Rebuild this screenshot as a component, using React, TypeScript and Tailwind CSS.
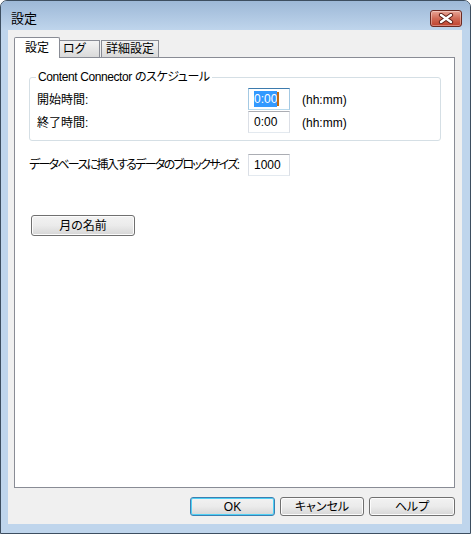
const font =
  "font-['Liberation_Sans','Noto_Sans_CJK_JP',sans-serif] [font-feature-settings:'palt']";

const CloseButton = () => (
  <div className="mt-[9px] w-[32px] h-[17px] rounded-[3px] border border-[#6b2a22] bg-gradient-to-b from-[#e8a597] via-[#cf6a56] to-[#c0402c] flex items-center justify-center shadow-[inset_0_0_0_1px_rgba(255,255,255,0.35)]">
    <svg width="16" height="11" viewBox="0 0 16 11">
      <path d="M3 2 L13 9 M13 2 L3 9" stroke="#5b1b13" strokeWidth="4.2" strokeLinecap="round" />
      <path d="M3 2 L13 9 M13 2 L3 9" stroke="#ffffff" strokeWidth="2.4" strokeLinecap="round" />
    </svg>
  </div>
);

const Button = ({ label, w, primary }: { label: string; w: string; primary?: boolean }) => (
  <div
    className={`${w} h-full rounded-[3px] border flex items-center justify-center bg-gradient-to-b from-[#f2f2f2] via-[#ebebeb] to-[#d6d6d6] ${
      primary
        ? "border-[#3c7fb1] shadow-[inset_0_0_0_1px_#4fd0f5]"
        : "border-[#707070] shadow-[inset_0_0_0_1px_#fcfcfc]"
    }`}
  >
    {label}
  </div>
);

export default function App() {
  return (
    <div className={`w-[471px] h-[534px] rounded-t-[7px] border border-[#3d4e60] bg-[#bfd5ec] flex flex-col text-[12px] leading-[16px] text-black ${font}`}>
      {/* title bar */}
      <div className="h-[29px] shrink-0 flex items-start justify-between pl-[10px] pr-[8px] rounded-t-[6px] bg-gradient-to-b from-[#9db8d7] to-[#bfd5ec]">
        <span className="mt-[10px] text-[13px]">設定</span>
        <CloseButton />
      </div>

      {/* client */}
      <div className="ml-[7px] mr-[8px] h-[494px] bg-[#f0f0f0] flex flex-col pt-[7px] pl-[6px] pr-[7px]">
        {/* tabs */}
        <div className="h-[20px] shrink-0 flex items-end relative z-10">
          <div className="w-[46px] h-[21px] -mb-px bg-white border border-b-0 border-[#898c95] rounded-t-[2px] flex items-center justify-center">
            設定
          </div>
          <div className="w-[40px] h-[17px] border border-l-0 border-b-0 border-[#898c95] bg-gradient-to-b from-[#f3f3f3] to-[#dadada] flex items-center pl-[3px]">
            ログ
          </div>
          <div className="w-[58px] h-[17px] ml-px border border-b-0 border-[#898c95] bg-gradient-to-b from-[#f3f3f3] to-[#dadada] flex items-center justify-center">
            詳細設定
          </div>
        </div>

        {/* panel */}
        <div className="h-[431px] shrink-0 bg-white border border-[#898c95] flex flex-col items-start">
          <fieldset className="mt-[12px] ml-[14px] w-[412px] border border-[#d5dfe5] rounded-[3px] pl-[7px] pb-[7px] flex flex-col gap-px">
            <legend className="-ml-[1px] px-[2px] leading-[14px] tracking-[-0.4px]">Content Connector のスケジュール</legend>
            <div className="mt-[4px] h-[22px] flex items-center">
              <span className="w-[211px] pt-[2px]">開始時間:</span>
              <div className="w-[42px] h-[22px] border border-[#3d7bad] border-b-[#b7d9ed] border-x-[#a4c9e3] bg-white flex items-center pl-[5px]">
                <span className="bg-[#3399ff] text-white">0:00</span>
                <span className="w-[2px] h-[14px] bg-[#c46a10]" />
              </div>
              <span className="ml-[12px] pt-[2px]">(hh:mm)</span>
            </div>
            <div className="h-[22px] flex items-center">
              <span className="w-[211px] pt-[2px]">終了時間:</span>
              <div className="w-[42px] h-[22px] border border-[#abadb3] border-b-[#e3e9ef] border-x-[#dbdfe6] bg-white flex items-center pl-[5px]">
                0:00
              </div>
              <span className="ml-[12px] pt-[2px]">(hh:mm)</span>
            </div>
          </fieldset>

          <div className="mt-[13px] ml-[14px] h-[22px] flex items-center">
            <span className="w-[219px] shrink-0 whitespace-nowrap tracking-[-1.7px]">
              データベースに挿入するデータのブロックサイズ:
            </span>
            <div className="w-[42px] h-[22px] shrink-0 border border-[#abadb3] border-b-[#e3e9ef] border-x-[#dbdfe6] bg-white flex items-center pl-[5px]">
              1000
            </div>
          </div>

          <div className="mt-[39px] ml-[16px] h-[21px]">
            <Button label="月の名前" w="w-[104px]" />
          </div>
        </div>

        {/* buttons */}
        <div className="mt-[9px] h-[19px] shrink-0 flex justify-end gap-[5px]">
          <Button label="OK" w="w-[85px]" primary />
          <Button label="キャンセル" w="w-[84px]" />
          <Button label="ヘルプ" w="w-[86px]" />
        </div>
      </div>
    </div>
  );
}
